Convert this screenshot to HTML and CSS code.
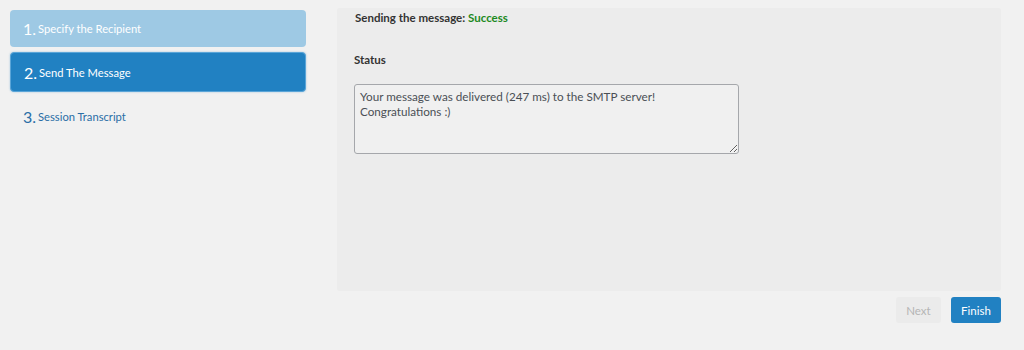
FILE: index.html
```html
<!DOCTYPE html>
<html>
<head>
<meta charset="utf-8">
<link rel="stylesheet" href="styles.css">
</head>
<body>
<div class="wrap">
  <nav class="steps">
    <div class="step done"><span class="num">1.</span><span>Specify the Recipient</span></div>
    <div class="step active"><span class="num">2.</span><span>Send The Message</span></div>
    <div class="step"><span class="num">3.</span><span>Session Transcript</span></div>
  </nav>
  <div class="main">
    <section class="panel">
      <div class="result">Sending the message: <span class="ok">Success</span></div>
      <div class="label">Status</div>
      <textarea class="status" readonly>Your message was delivered (247 ms) to the SMTP server!
Congratulations :)</textarea>
    </section>
    <div class="actions">
      <button class="btn next" disabled>Next</button>
      <button class="btn finish">Finish</button>
    </div>
  </div>
</div>
</body>
</html>
```
FILE: styles.css
```css
html, body { margin: 0; padding: 0; }
body {
  background: #f1f1f1;
  font-family: Lato, "Noto Sans", sans-serif;
  color: #3c434a;
  width: 1024px;
  height: 350px;
  overflow: hidden;
}
.wrap {
  display: flex;
  padding: 8px 23px 0 10px;
  gap: 31px;
}
.steps {
  width: 296px;
  display: flex;
  flex-direction: column;
  gap: 5px;
  padding-top: 2px;
}
.step {
  height: 37px;
  box-sizing: border-box;
  padding: 0 13px;
  display: flex;
  align-items: center;
  font-size: 11.2px;
  color: #2a6ea6;
  border-radius: 4px;
}
.step .num { font-size: 16px; margin-right: 2px; }
.step.done { background: #9ec9e4; color: #fff; }
.step.active {
  background: #2181c2;
  color: #fff;
  height: 40px;
  border: 1px solid #5aa5d8;
  box-shadow: 0 0 2px rgba(33,129,194,0.4);
}
.step:last-child { padding-top: 2px; }
.main { flex: 1; display: flex; flex-direction: column; }
.panel {
  background: #ececec;
  height: 283px;
  box-sizing: border-box;
  padding: 3px 17px;
  border-radius: 2px;
}
.result { font-size: 11.5px; font-weight: 700; color: #333; margin-left: 1px; }
.ok { color: #1d8a1d; }
.label { font-size: 11.5px; font-weight: 700; color: #333; margin-top: 29px; }
.status {
  display: block;
  margin-top: 18px;
  width: 385px;
  height: 70px;
  box-sizing: border-box;
  border: 1px solid #a5a7ab;
  border-radius: 3px;
  background: #f0f0f0;
  font-family: Lato, "Noto Sans", sans-serif;
  font-size: 11.7px;
  line-height: 15px;
  color: #4a4f55;
  padding: 4px 5px;
  resize: vertical;
}
.actions {
  display: flex;
  justify-content: flex-end;
  gap: 10px;
  margin-top: 6px;
}
.btn {
  height: 26px;
  border: none;
  border-radius: 3px;
  font-family: Lato, "Noto Sans", sans-serif;
  font-size: 11.5px;
  padding: 0 8px;
}
.next { background: #ebebeb; color: #b5b5b5; width: 45px; }
.finish { background: #2181c2; color: #fff; width: 50px; }
```
